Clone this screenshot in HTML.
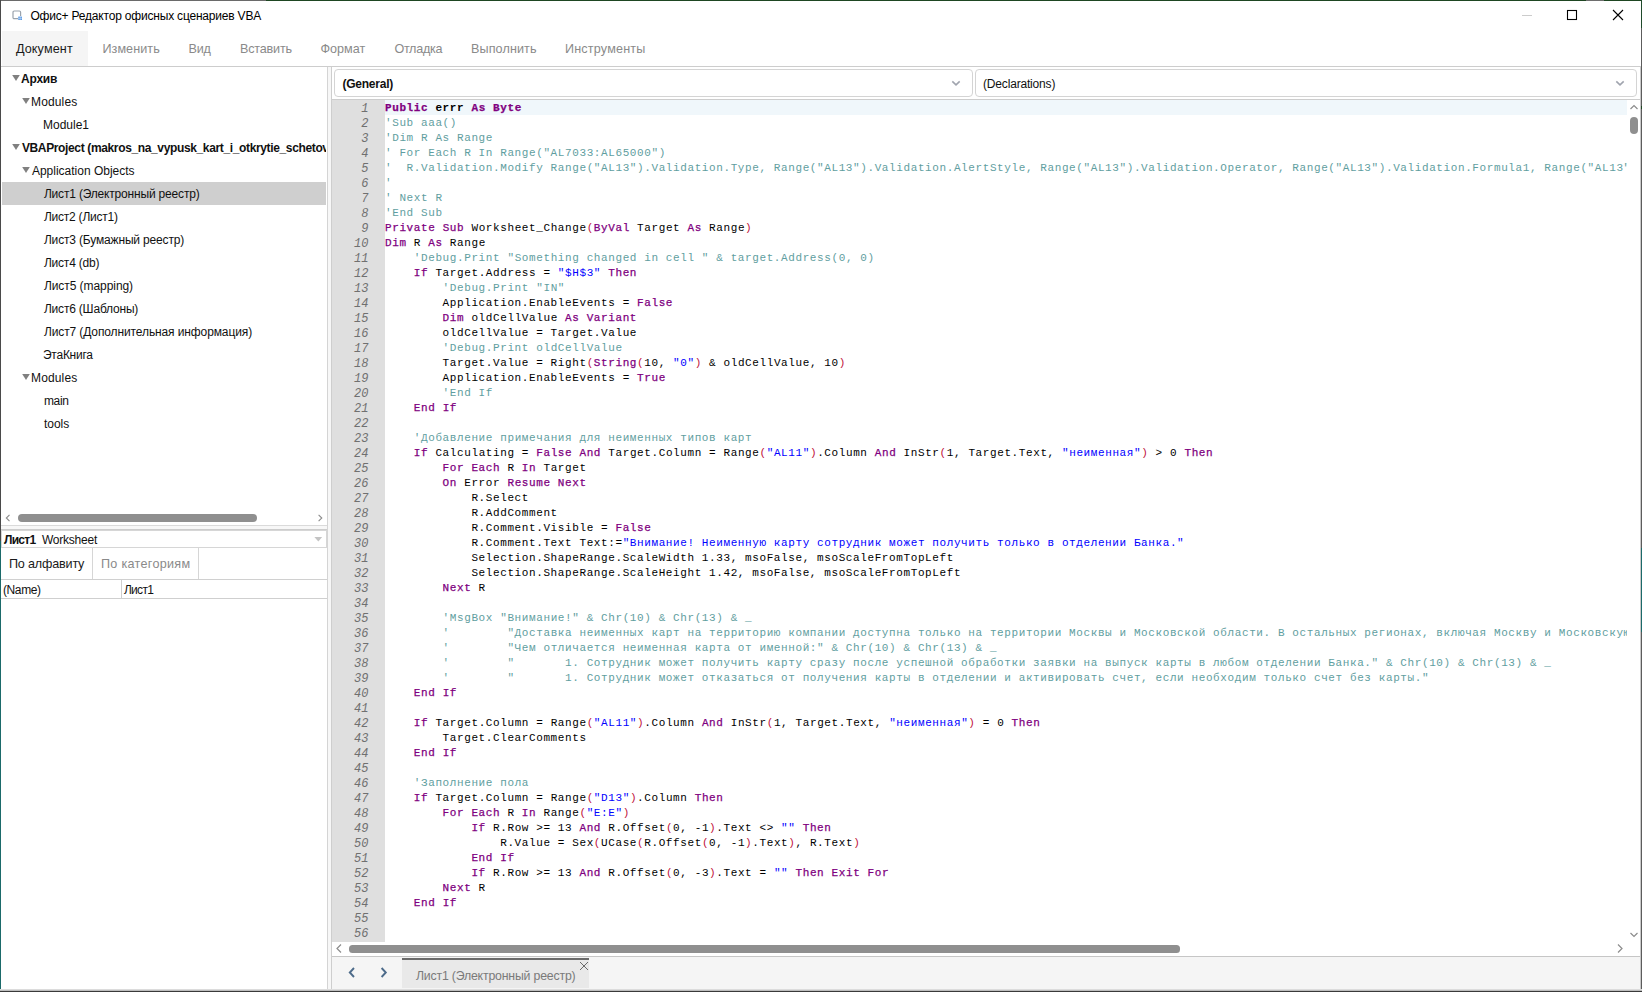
<!DOCTYPE html>
<html lang="ru"><head><meta charset="utf-8"><title>Офис+ Редактор офисных сценариев VBA</title>
<style>
html,body{margin:0;padding:0;}
body{width:1642px;height:992px;position:relative;overflow:hidden;background:#fff;font-family:"Liberation Sans",sans-serif;font-size:12px;color:#000;}
div,span,svg{position:absolute;box-sizing:border-box;}
.t{white-space:nowrap;line-height:18px;height:18px;}
.t span{position:static;}
.title{font-size:12px;}
.menu{font-size:12.6px;color:#8a8a8a;}
.menu.act{color:#1a1a1a;}
.tree{font-size:12px;color:#111;}
.bd{font-weight:bold;}
.sel{left:2px;width:325px;height:23px;background:#cfcfcf;}
#leftclip{left:1px;top:67px;width:325px;height:440px;overflow:hidden;}
#code{left:385px;top:100px;width:1242px;height:840px;overflow:hidden;font-family:"Liberation Mono",monospace;font-size:11px;letter-spacing:0.6px;}
#code div{position:static;height:15px;line-height:17px;white-space:pre;}
#code i{font-style:normal;}
#code b{color:#800080;font-weight:normal;-webkit-text-stroke:0.25px #800080;}
#code .l1 b{font-weight:bold;}
#code .c{color:#5f9ea0;}
#code .s{color:#0000ff;}
#code .p{color:#c0103a;}
#code .l1{background:#f0f7fb;font-weight:bold;}
#gut{left:332px;top:100px;width:53px;height:842px;background:#dfdfdf;overflow:hidden;font-family:"Liberation Mono",monospace;font-size:12px;font-style:italic;color:#707070;text-align:right;padding-right:16.5px;}
#gut div{position:static;height:15px;line-height:19px;}
.ln{background:#c8c8c8;}
</style></head><body>
<!-- window frame -->
<div style="left:0;top:0;width:1642px;height:1px;background:#6a6a6a"></div>
<div style="left:266px;top:0;width:1376px;height:1px;background:#1e4622"></div>
<div style="left:1586px;top:0;width:18px;height:1px;background:#6e6e6e"></div>
<div style="left:0;top:0;width:1px;height:992px;background:#4a4a4a"></div>
<div style="left:0;top:541px;width:1px;height:451px;background:#1b6a6a"></div>
<div style="left:1641px;top:0;width:1px;height:992px;background:#5c5c5c"></div>
<div style="left:1641px;top:106px;width:1px;height:3px;background:#1e4622"></div>
<div style="left:1641px;top:0;width:1px;height:28px;background:#1f4a2b"></div>
<div style="left:1641px;top:548px;width:1px;height:84px;background:#1b6a6a"></div>
<div style="left:0;top:989px;width:1642px;height:1px;background:#dcdcdc"></div>
<div style="left:0;top:990px;width:1642px;height:1px;background:#bdbdbd"></div>
<div style="left:0;top:991px;width:1642px;height:1px;background:#3a3a3a"></div>

<!-- title bar -->
<svg style="left:12px;top:10px" width="11" height="11" viewBox="0 0 11 11"><rect x="1" y="1" width="7.6" height="7.6" rx="1.2" fill="none" stroke="#9aa3ad" stroke-width="1.2"/><rect x="6" y="6" width="5" height="5" fill="#fff"/><rect x="6.3" y="6.6" width="3.6" height="3.4" fill="#4a90e2"/><path d="M8.1 6.6v3.4M6.3 8.3h3.6" stroke="#dbe9fa" stroke-width="0.6"/></svg>
<span class="t title" style="left:30.45px;top:7px;letter-spacing:-0.193px;"><span id="title">Офис+ Редактор офисных сценариев VBA</span></span>
<div style="left:1522px;top:15px;width:10px;height:1px;background:#cccccc"></div>
<svg style="left:1566px;top:9px" width="12" height="12" viewBox="0 0 12 12"><rect x="1.5" y="1.5" width="9" height="9" fill="none" stroke="#000" stroke-width="1.1"/></svg>
<svg style="left:1612px;top:9px" width="12" height="12" viewBox="0 0 12 12"><path d="M1 1L11 11M11 1L1 11" stroke="#000" stroke-width="1.1" fill="none"/></svg>

<!-- menu -->
<div style="left:2px;top:31px;width:86px;height:35px;background:#f5f5f5"></div>
<span class="t menu act" style="left:15.90px;top:40px;letter-spacing:0.129px;"><span id="mn0">Документ</span></span>
<span class="t menu" style="left:102.45px;top:40px;letter-spacing:0.064px;"><span id="mn1">Изменить</span></span>
<span class="t menu" style="left:188.55px;top:40px;letter-spacing:-0.225px;"><span id="mn2">Вид</span></span>
<span class="t menu" style="left:240.00px;top:40px;letter-spacing:-0.193px;"><span id="mn3">Вставить</span></span>
<span class="t menu" style="left:320.45px;top:40px;"><span id="mn4">Формат</span></span>
<span class="t menu" style="left:394.45px;top:40px;letter-spacing:-0.300px;"><span id="mn5">Отладка</span></span>
<span class="t menu" style="left:471.00px;top:40px;letter-spacing:0.112px;"><span id="mn6">Выполнить</span></span>
<span class="t menu" style="left:565.00px;top:40px;letter-spacing:0.180px;"><span id="mn7">Инструменты</span></span>
<div class="ln" style="left:1px;top:66px;width:1640px;height:1px;background:#cdcdcd"></div>

<!-- left panel -->
<div id="leftclip"><div style="left:-1px;top:-67px;width:400px;height:600px">
<svg class="arr" style="left:12px;top:75px" width="8" height="6" viewBox="0 0 8 6"><path d="M0.2 0H7.8L4 6Z" fill="#808080"/></svg>
<span class="t tree bd" style="left:21.00px;top:70px;letter-spacing:-0.225px;"><span id="tr0">Архив</span></span>
<svg class="arr" style="left:22px;top:98px" width="8" height="6" viewBox="0 0 8 6"><path d="M0.2 0H7.8L4 6Z" fill="#808080"/></svg>
<span class="t tree" style="left:31.00px;top:93px;letter-spacing:0.150px;"><span id="tr1">Modules</span></span>
<span class="t tree" style="left:43.00px;top:116px;"><span id="tr2">Module1</span></span>
<svg class="arr" style="left:12px;top:144px" width="8" height="6" viewBox="0 0 8 6"><path d="M0.2 0H7.8L4 6Z" fill="#808080"/></svg>
<span class="t tree bd" style="left:21.90px;top:139px;letter-spacing:-0.360px;"><span id="tr3">VBAProject (makros_na_vypusk_kart_i_otkrytie_scheto</span>v.xlsm)</span>
<svg class="arr" style="left:22px;top:167px" width="8" height="6" viewBox="0 0 8 6"><path d="M0.2 0H7.8L4 6Z" fill="#808080"/></svg>
<span class="t tree" style="left:31.90px;top:162px;"><span id="tr4">Application Objects</span></span>
<div class="sel" style="top:182px"></div>
<span class="t tree" style="left:43.90px;top:185px;letter-spacing:-0.180px;"><span id="tr5">Лист1 (Электронный реестр)</span></span>
<span class="t tree" style="left:43.90px;top:208px;letter-spacing:-0.225px;"><span id="tr6">Лист2 (Лист1)</span></span>
<span class="t tree" style="left:43.90px;top:231px;letter-spacing:-0.164px;"><span id="tr7">Лист3 (Бумажный реестр)</span></span>
<span class="t tree" style="left:43.90px;top:254px;letter-spacing:-0.200px;"><span id="tr8">Лист4 (db)</span></span>
<span class="t tree" style="left:43.90px;top:277px;letter-spacing:-0.064px;"><span id="tr9">Лист5 (mapping)</span></span>
<span class="t tree" style="left:43.90px;top:300px;letter-spacing:-0.193px;"><span id="tr10">Лист6 (Шаблоны)</span></span>
<span class="t tree" style="left:43.90px;top:323px;letter-spacing:-0.112px;"><span id="tr11">Лист7 (Дополнительная информация)</span></span>
<span class="t tree" style="left:43.00px;top:346px;letter-spacing:-0.257px;"><span id="tr12">ЭтаКнига</span></span>
<svg class="arr" style="left:22px;top:374px" width="8" height="6" viewBox="0 0 8 6"><path d="M0.2 0H7.8L4 6Z" fill="#808080"/></svg>
<span class="t tree" style="left:31.00px;top:369px;letter-spacing:0.150px;"><span id="tr13">Modules</span></span>
<span class="t tree" style="left:43.90px;top:392px;letter-spacing:-0.300px;"><span id="tr14">main</span></span>
<span class="t tree" style="left:43.90px;top:415px;"><span id="tr15">tools</span></span>
</div></div>
<div style="left:327px;top:67px;width:1px;height:922px;background:#d4d4d4"></div>
<div style="left:328px;top:67px;width:3px;height:922px;background:#f7f7f7"></div>
<div style="left:331px;top:67px;width:1px;height:922px;background:#cecece"></div>

<!-- left h scrollbar -->
<svg style="left:4px;top:512px" width="8" height="11" viewBox="0 0 8 11"><path d="M5.5 2.8L2.3 6L5.5 9.2" stroke="#8c8c8c" stroke-width="1.1" fill="none"/></svg>
<div style="left:18px;top:514px;width:239px;height:8px;border-radius:4px;background:#8f8f8f"></div>
<svg style="left:315px;top:512px" width="8" height="11" viewBox="0 0 8 11"><path d="M3.6 2.8L6.8 6L3.6 9.2" stroke="#8c8c8c" stroke-width="1.1" fill="none"/></svg>
<div style="left:1px;top:525px;width:326px;height:1px;background:#dadada"></div>
<div style="left:1px;top:526px;width:326px;height:3px;background:#f7f7f7"></div>
<div style="left:1px;top:529px;width:326px;height:1px;background:#cccccc"></div>
<!-- object dropdown -->
<div style="left:1px;top:530px;width:326px;height:18px;border:1px solid #d6d6d6;background:#fff"></div>
<span class="t tree bd" style="left:3.90px;top:531px;letter-spacing:-0.675px;"><span id="obj1">Лист1</span></span><span class="t tree" style="left:41.90px;top:531px;letter-spacing:-0.225px;"><span id="obj2">Worksheet</span></span>
<svg style="left:314px;top:537px" width="9" height="5" viewBox="0 0 9 5"><path d="M0.4 0H8.2L4.3 4.4Z" fill="#c4c4c4"/></svg>
<!-- prop tabs -->
<div style="left:92px;top:548px;width:1px;height:31px;background:#d6d6d6"></div>
<div style="left:198px;top:548px;width:1px;height:31px;background:#d6d6d6"></div>
<div style="left:1px;top:579px;width:326px;height:1px;background:#d0d0d0"></div>
<span class="t menu act" style="left:9.00px;top:555px;letter-spacing:-0.180px;"><span id="pt1">По алфавиту</span></span><span class="t menu" style="left:101.00px;top:555px;letter-spacing:0.300px;"><span id="pt2">По категориям</span></span><span class="t tree" style="left:2.90px;top:581px;letter-spacing:-0.360px;"><span id="pn1">(Name)</span></span><span class="t tree" style="left:123.90px;top:581px;letter-spacing:-0.675px;"><span id="pn2">Лист1</span></span>
<div style="left:121px;top:580px;width:1px;height:18px;background:#cfcfcf"></div>
<div style="left:1px;top:598px;width:326px;height:1px;background:#cfcfcf"></div>

<!-- dropdowns -->
<div style="left:334px;top:69px;width:639px;height:28px;border:1px solid #d4d4d4;border-radius:4px;background:#fff"></div>
<div style="left:975px;top:69px;width:662px;height:28px;border:1px solid #d4d4d4;border-radius:4px;background:#fff"></div>
<svg style="left:950px;top:79px" width="12" height="8" viewBox="0 0 12 8"><path d="M2.3 2.3L6 5.8L9.7 2.3" stroke="#a0a4ae" stroke-width="1.6" fill="none"/></svg>
<svg style="left:1614px;top:79px" width="12" height="8" viewBox="0 0 12 8"><path d="M2.3 2.3L6 5.8L9.7 2.3" stroke="#a0a4ae" stroke-width="1.6" fill="none"/></svg>
<span class="t tree bd" style="left:342.45px;top:75px;letter-spacing:-0.225px;"><span id="dd1">(General)</span></span><span class="t tree" style="left:983.00px;top:75px;letter-spacing:-0.173px;"><span id="dd2">(Declarations)</span></span>
<div style="left:332px;top:99px;width:1308px;height:1px;background:#cdcdcd"></div>
<div style="left:1640px;top:67px;width:1px;height:922px;background:#c9c9c9"></div>

<!-- editor -->
<div id="gut">
<div>1</div>
<div>2</div>
<div>3</div>
<div>4</div>
<div>5</div>
<div>6</div>
<div>7</div>
<div>8</div>
<div>9</div>
<div>10</div>
<div>11</div>
<div>12</div>
<div>13</div>
<div>14</div>
<div>15</div>
<div>16</div>
<div>17</div>
<div>18</div>
<div>19</div>
<div>20</div>
<div>21</div>
<div>22</div>
<div>23</div>
<div>24</div>
<div>25</div>
<div>26</div>
<div>27</div>
<div>28</div>
<div>29</div>
<div>30</div>
<div>31</div>
<div>32</div>
<div>33</div>
<div>34</div>
<div>35</div>
<div>36</div>
<div>37</div>
<div>38</div>
<div>39</div>
<div>40</div>
<div>41</div>
<div>42</div>
<div>43</div>
<div>44</div>
<div>45</div>
<div>46</div>
<div>47</div>
<div>48</div>
<div>49</div>
<div>50</div>
<div>51</div>
<div>52</div>
<div>53</div>
<div>54</div>
<div>55</div>
<div>56</div>
</div>
<div style="left:385px;top:100px;width:1242px;height:15px;background:#f0f7fb"></div>
<div id="code">
<div class="l1"><b>Public</b> errr <b>As</b> <b>Byte</b></div><div><i class="c">&#x27;Sub aaa()</i></div><div><i class="c">&#x27;Dim R As Range</i></div><div><i class="c">&#x27; For Each R In Range(&quot;AL7033:AL65000&quot;)</i></div><div><i class="c">&#x27;  R.Validation.Modify Range(&quot;AL13&quot;).Validation.Type, Range(&quot;AL13&quot;).Validation.AlertStyle, Range(&quot;AL13&quot;).Validation.Operator, Range(&quot;AL13&quot;).Validation.Formula1, Range(&quot;AL13&quot;).Validation.Formula2</i></div><div><i class="c">&#x27;</i></div><div><i class="c">&#x27; Next R</i></div><div><i class="c">&#x27;End Sub</i></div><div><b>Private</b> <b>Sub</b> Worksheet_Change<i class="p">(</i><b>ByVal</b> Target <b>As</b> Range<i class="p">)</i></div><div><b>Dim</b> R <b>As</b> Range</div><div>    <i class="c">&#x27;Debug.Print &quot;Something changed in cell &quot; &amp; target.Address(0, 0)</i></div><div>    <b>If</b> Target.Address = <i class="s">&quot;$H$3&quot;</i> <b>Then</b></div><div>        <i class="c">&#x27;Debug.Print &quot;IN&quot;</i></div><div>        Application.EnableEvents = <b>False</b></div><div>        <b>Dim</b> oldCellValue <b>As</b> <b>Variant</b></div><div>        oldCellValue = Target.Value</div><div>        <i class="c">&#x27;Debug.Print oldCellValue</i></div><div>        Target.Value = Right<i class="p">(</i><b>String</b><i class="p">(</i>10, <i class="s">&quot;0&quot;</i><i class="p">)</i> &amp; oldCellValue, 10<i class="p">)</i></div><div>        Application.EnableEvents = <b>True</b></div><div>        <i class="c">&#x27;End If</i></div><div>    <b>End</b> <b>If</b></div><div></div><div>    <i class="c">&#x27;Добавление примечания для неименных типов карт</i></div><div>    <b>If</b> Calculating = <b>False</b> <b>And</b> Target.Column = Range<i class="p">(</i><i class="s">&quot;AL11&quot;</i><i class="p">)</i>.Column <b>And</b> InStr<i class="p">(</i>1, Target.Text, <i class="s">&quot;неименная&quot;</i><i class="p">)</i> &gt; 0 <b>Then</b></div><div>        <b>For</b> <b>Each</b> R <b>In</b> Target</div><div>        <b>On</b> Error <b>Resume</b> <b>Next</b></div><div>            R.Select</div><div>            R.AddComment</div><div>            R.Comment.Visible = <b>False</b></div><div>            R.Comment.Text Text:=<i class="s">&quot;Внимание! Неименную карту сотрудник может получить только в отделении Банка.&quot;</i></div><div>            Selection.ShapeRange.ScaleWidth 1.33, msoFalse, msoScaleFromTopLeft</div><div>            Selection.ShapeRange.ScaleHeight 1.42, msoFalse, msoScaleFromTopLeft</div><div>        <b>Next</b> R</div><div></div><div>        <i class="c">&#x27;MsgBox &quot;Внимание!&quot; &amp; Chr(10) &amp; Chr(13) &amp; _</i></div><div>        <i class="c">&#x27;        &quot;Доставка неименных карт на территорию компании доступна только на территории Москвы и Московской области. В остальных регионах, включая Москву и Московскую область, доставка не осуществляется.&quot;</i></div><div>        <i class="c">&#x27;        &quot;Чем отличается неименная карта от именной:&quot; &amp; Chr(10) &amp; Chr(13) &amp; _</i></div><div>        <i class="c">&#x27;        &quot;       1. Сотрудник может получить карту сразу после успешной обработки заявки на выпуск карты в любом отделении Банка.&quot; &amp; Chr(10) &amp; Chr(13) &amp; _</i></div><div>        <i class="c">&#x27;        &quot;       1. Сотрудник может отказаться от получения карты в отделении и активировать счет, если необходим только счет без карты.&quot;</i></div><div>    <b>End</b> <b>If</b></div><div></div><div>    <b>If</b> Target.Column = Range<i class="p">(</i><i class="s">&quot;AL11&quot;</i><i class="p">)</i>.Column <b>And</b> InStr<i class="p">(</i>1, Target.Text, <i class="s">&quot;неименная&quot;</i><i class="p">)</i> = 0 <b>Then</b></div><div>        Target.ClearComments</div><div>    <b>End</b> <b>If</b></div><div></div><div>    <i class="c">&#x27;Заполнение пола</i></div><div>    <b>If</b> Target.Column = Range<i class="p">(</i><i class="s">&quot;D13&quot;</i><i class="p">)</i>.Column <b>Then</b></div><div>        <b>For</b> <b>Each</b> R <b>In</b> Range<i class="p">(</i><i class="s">&quot;E:E&quot;</i><i class="p">)</i></div><div>            <b>If</b> R.Row &gt;= 13 <b>And</b> R.Offset<i class="p">(</i>0, -1<i class="p">)</i>.Text &lt;&gt; <i class="s">&quot;&quot;</i> <b>Then</b></div><div>                R.Value = Sex<i class="p">(</i>UCase<i class="p">(</i>R.Offset<i class="p">(</i>0, -1<i class="p">)</i>.Text<i class="p">)</i>, R.Text<i class="p">)</i></div><div>            <b>End</b> <b>If</b></div><div>            <b>If</b> R.Row &gt;= 13 <b>And</b> R.Offset<i class="p">(</i>0, -3<i class="p">)</i>.Text = <i class="s">&quot;&quot;</i> <b>Then</b> <b>Exit</b> <b>For</b></div><div>        <b>Next</b> R</div><div>    <b>End</b> <b>If</b></div><div></div><div></div>
</div>
<!-- v scrollbar -->
<svg style="left:1629px;top:103px" width="10" height="8" viewBox="0 0 10 8"><path d="M1.5 6L5 2.5L8.5 6" stroke="#8c8c8c" stroke-width="1.2" fill="none"/></svg>
<div style="left:1630px;top:117px;width:8px;height:17px;border-radius:4px;background:#8f8f8f"></div>
<svg style="left:1629px;top:931px" width="10" height="8" viewBox="0 0 10 8"><path d="M1.5 2L5 5.5L8.5 2" stroke="#8c8c8c" stroke-width="1.2" fill="none"/></svg>
<!-- h scrollbar -->
<svg style="left:335px;top:943px" width="8" height="11" viewBox="0 0 8 11"><path d="M6 1.5L2 5.5L6 9.5" stroke="#8c8c8c" stroke-width="1.2" fill="none"/></svg>
<div style="left:349px;top:945px;width:831px;height:8px;border-radius:3.5px;background:#8f8f8f"></div>
<svg style="left:1616px;top:943px" width="8" height="11" viewBox="0 0 8 11"><path d="M2 1.5L6 5.5L2 9.5" stroke="#8c8c8c" stroke-width="1.2" fill="none"/></svg>
<div style="left:332px;top:956px;width:1308px;height:1px;background:#c6c6c6"></div>
<!-- bottom tab bar -->
<div style="left:332px;top:957px;width:1308px;height:32px;background:#f5f5f5"></div>
<svg style="left:346px;top:965px" width="10" height="15" viewBox="0 0 10 15"><path d="M8 3L3.8 7.5L8 12" stroke="#4d6b8a" stroke-width="1.9" fill="none"/></svg>
<svg style="left:378px;top:965px" width="10" height="15" viewBox="0 0 10 15"><path d="M3.6 3L7.8 7.5L3.6 12" stroke="#4d6b8a" stroke-width="1.9" fill="none"/></svg>
<div style="left:402px;top:958px;width:187px;height:30px;background:#e9e9e9"></div>
<div style="left:402px;top:958px;width:187px;height:2px;background:#6b6b6b"></div>
<span class="t btab" style="left:415.90px;top:967px;letter-spacing:-0.180px;color:#7a7a7a;font-size:12.3px;"><span id="btab">Лист1 (Электронный реестр)</span></span>
<svg style="left:579px;top:961px" width="10" height="10" viewBox="0 0 10 10"><path d="M1 1L9 9M9 1L1 9" stroke="#6b6b6b" stroke-width="1" fill="none"/></svg>
</body></html>
